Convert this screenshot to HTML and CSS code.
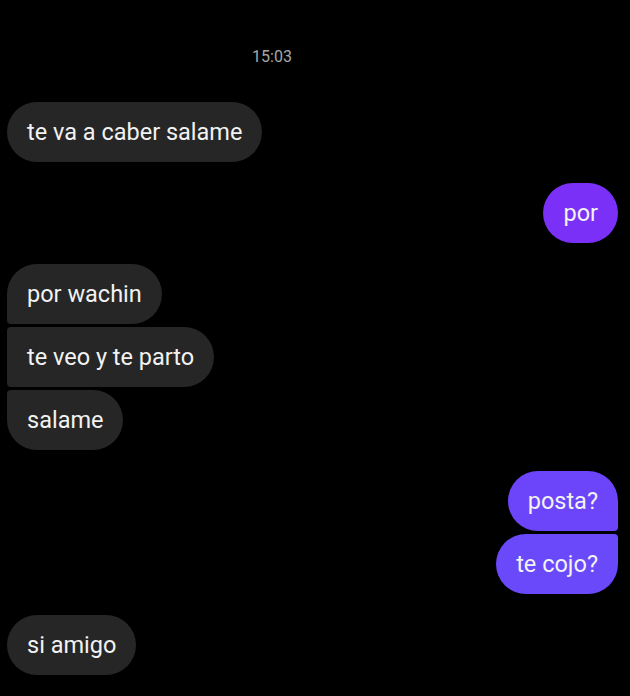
FILE: index.html
```html
<!DOCTYPE html>
<html>
<head>
    <title>Chat</title>
    <link rel="stylesheet" href="styles.css">
</head>
<body>
    <div class="chat">
        <div class="hora">15:03</div>

        <div class="grupo izq">
            <div class="msg">te va a caber salame</div>
        </div>

        <div class="grupo der">
            <div class="msg m1">por</div>
        </div>

        <div class="grupo izq">
            <div class="msg">por wachin</div>
            <div class="msg">te veo y te parto</div>
            <div class="msg">salame</div>
        </div>

        <div class="grupo der">
            <div class="msg m2">posta?</div>
            <div class="msg m3">te cojo?</div>
        </div>

        <div class="grupo izq">
            <div class="msg">si amigo</div>
        </div>
    </div>
</body>
</html>
```

FILE: styles.css
```css
html, body { margin: 0; background: #000; }
body { font-family: Roboto, "Noto Sans", sans-serif; color: #f2f2f2; }
.chat { display: flex; flex-direction: column; gap: 21px; padding: 0 12px 0 7px; }
.hora { text-align: center; font-size: 16px; line-height: 20px; color: #a8a8a8; padding: 47px 81px 14px 0; }
.grupo { display: flex; flex-direction: column; gap: 3px; }
.izq { align-items: flex-start; }
.der { align-items: flex-end; }
.msg { font-size: 23.5px; line-height: 24px; padding: 18px 20px; border-radius: 30px; }
.izq .msg { background: #262626; }
.izq .msg:not(:first-child) { border-top-left-radius: 4px; }
.izq .msg:not(:last-child) { border-bottom-left-radius: 4px; }
.der .msg:not(:first-child) { border-top-right-radius: 4px; }
.der .msg:not(:last-child) { border-bottom-right-radius: 4px; }
.m1 { background: #7b30f7; }
.m2 { background: #6c45fb; }
.m3 { background: #6a49fb; }
```
